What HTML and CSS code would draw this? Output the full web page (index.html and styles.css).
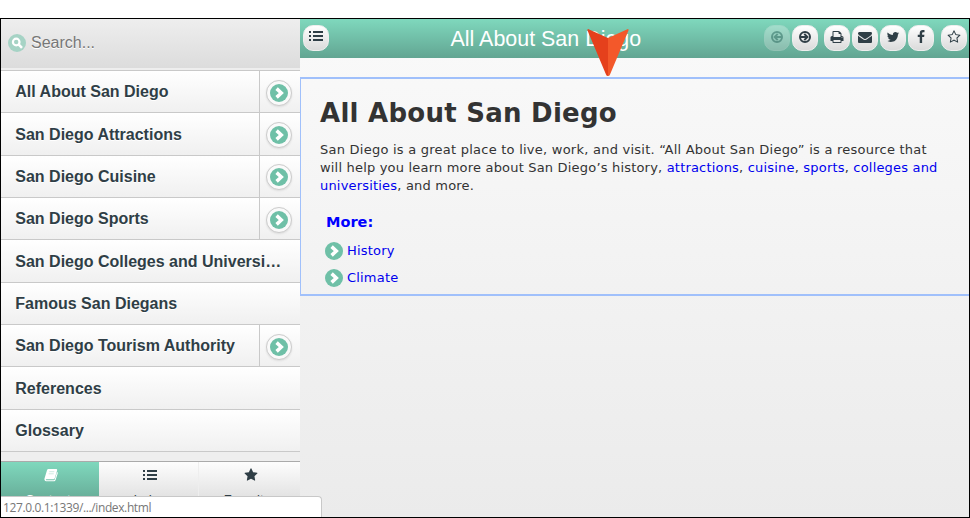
FILE: index.html
```html
<!DOCTYPE html>
<html lang="en">
<head>
<meta charset="utf-8">
<title>All About San Diego</title>
<link rel="stylesheet" href="styles.css">
</head>
<body>
<svg class="sprite" aria-hidden="true">
  <symbol id="chevron" viewBox="0 0 18 18"><circle cx="9" cy="9" r="9" fill="#6fc0a7"/><path d="M6.600 4.600L11.300 9L6.600 13.400" fill="none" stroke="#fff" stroke-width="3.500"/></symbol>
  <symbol id="search" viewBox="0 0 18 18"><circle cx="9" cy="9" r="9" fill="#a6d3c5"/><circle cx="8.200" cy="8" r="3.300" fill="none" stroke="#fff" stroke-width="2.200"/><path d="M10.600 10.400L14 13.800" stroke="#fff" stroke-width="2.600"/></symbol>
  <symbol id="list" viewBox="0 0 14 12"><path d="M0 1h2v2H0zM0 5h2v2H0zM0 9h2v2H0zM4 1h10v2H4zM4 5h10v2H4zM4 9h10v2H4z"/></symbol>
  <symbol id="right" viewBox="0 0 14 14"><circle cx="7" cy="7" r="5" fill="none" stroke="currentColor" stroke-width="2"/><path d="M3 6h4L5.600 4.600L7 3.200L10.800 7L7 10.800L5.600 9.400L7 8H3z"/></symbol>
  <symbol id="left" viewBox="0 0 14 14"><circle cx="7" cy="7" r="5" fill="none" stroke="currentColor" stroke-width="2"/><path d="M11 6H7l1.400-1.400L7 3.200L3.200 7L7 10.800l1.400-1.400L7 8h4z"/></symbol>
  <symbol id="print" viewBox="0 0 1792 1792"><path d="M448 1536h896v-256h-896v256zm0-640h896v-384h-160q-40 0-68-28t-28-68v-160h-640v640zm1152 64q0-26-19-45t-45-19-45 19-19 45 19 45 45 19 45-19 19-45zm128 0v416q0 13-9.500 22.500t-22.500 9.500h-224v160q0 40-28 68t-68 28h-960q-40 0-68-28t-28-68v-160h-224q-13 0-22.500-9.500t-9.500-22.500v-416q0-79 56.500-135.500t135.500-56.500h64v-544q0-40 28-68t68-28h672q40 0 88 20t76 48l152 152q28 28 48 76t20 88v256h64q79 0 135.500 56.500t56.500 135.500z"/></symbol>
  <symbol id="mail" viewBox="0 0 1792 1792"><path d="M1792 710v794q0 66-47 113t-113 47h-1472q-66 0-113-47t-47-113v-794q44 49 101 87 362 246 497 345 57 42 92.500 65.500t94.500 48 110 24.500h2q51 0 110-24.500t94.500-48 92.500-65.500q170-123 498-345 57-39 100-87zm0-294q0 79-49 151t-122 123q-376 261-468 325-10 7-42.500 31t-54 38.500-52 32.500-57.500 27-50 9h-2q-23 0-50-9t-57.500-27-52-32.500-54-38.500-42.500-31q-91-64-262-182.500t-205-142.500q-62-42-117-115.500t-55-136.500q0-78 41.500-130t118.500-52h1472q65 0 112.500 47t47.500 113z"/></symbol>
  <symbol id="twitter" viewBox="0 0 1792 1792"><path d="M1684 408q-67 98-162 167 1 14 1 42 0 130-38 259.500t-115.500 248.500-184.500 210.500-258 146-323 54.500q-271 0-496-145 35 4 78 4 225 0 401-138-105-2-188-64.500t-114-159.500q33 5 61 5 43 0 85-11-112-23-185.500-111.500t-73.500-205.500v-4q68 38 146 41-66-44-105-115t-39-154q0-88 44-163 121 149 294.500 238.500t371.500 99.500q-8-38-8-74 0-134 94.500-228.500t228.500-94.500q140 0 236 102 109-21 205-78-37 115-142 178 93-10 186-50z"/></symbol>
  <symbol id="facebook" viewBox="0 0 1792 1792"><path d="M1343 12v264h-157q-86 0-116 36t-30 108v189h293l-39 296h-254v759h-306v-759h-255v-296h255v-218q0-186 104-288.500t277-102.500q147 0 228 12z"/></symbol>
  <symbol id="star" viewBox="0 0 1792 1792"><path d="M1728 647q0 22-26 48l-363 354 86 500q1 7 1 20 0 21-10.500 35.500t-30.500 14.500q-19 0-40-12l-449-236-449 236q-22 12-40 12-21 0-31.500-14.500t-10.500-35.500q0-6 2-20l86-500-364-354q-25-27-25-48 0-37 56-46l502-73 225-455q19-41 49-41t49 41l225 455 502 73q56 9 56 46z"/></symbol>
  <symbol id="star-o" viewBox="0 0 1792 1792"><path d="M1201 1004l306-297-422-62-189-382-189 382-422 62 306 297-73 421 378-199 377 199zm527-357q0 22-26 48l-363 354 86 500q1 7 1 20 0 50-41 50-19 0-40-12l-449-236-449 236q-22 12-40 12-21 0-31.500-14.500t-10.500-35.500q0-6 2-20l86-500-364-354q-25-27-25-48 0-37 56-46l502-73 225-455q19-41 49-41t49 41l225 455 502 73q56 9 56 46z"/></symbol>
  <symbol id="book" viewBox="0 0 14 14"><path d="M4.600 1h7.400c1 0 1.400.6 1.100 1.500L10.800 10c-.3 1-.8 1.300-1.600 1.300H2.300c-.6 0-.6.9 0 .9h7.400c.6 0 .9-.3 1.100-.9l2.300-7.200c.6.300.8.7.6 1.300l-2.100 6.500c-.3.900-1 1.300-1.800 1.300H2.200C.8 13.200.100 11.900.500 10.600L3 2.300C3.300 1.400 3.800 1 4.600 1z"/><path d="M5.300 3.700h5M4.700 5.800h5" stroke="#a9dccb" stroke-width=".6"/></symbol>
</svg>
<div class="window">
  <aside class="sidebar">
    <div class="search"><svg class="disc"><use href="#search"/></svg><span>Search...</span></div>
    <ul class="toc">
      <li><span class="label">All About San Diego</span><span class="more"><i><svg class="disc"><use href="#chevron"/></svg></i></span></li>
      <li><span class="label">San Diego Attractions</span><span class="more"><i><svg class="disc"><use href="#chevron"/></svg></i></span></li>
      <li><span class="label">San Diego Cuisine</span><span class="more"><i><svg class="disc"><use href="#chevron"/></svg></i></span></li>
      <li><span class="label">San Diego Sports</span><span class="more"><i><svg class="disc"><use href="#chevron"/></svg></i></span></li>
      <li><span class="label">San Diego Colleges and Universi…</span></li>
      <li><span class="label">Famous San Diegans</span></li>
      <li><span class="label">San Diego Tourism Authority</span><span class="more"><i><svg class="disc"><use href="#chevron"/></svg></i></span></li>
      <li><span class="label">References</span></li>
      <li><span class="label">Glossary</span></li>
    </ul>
    <nav class="tabs">
      <a class="tab active"><svg><use href="#book"/></svg><span>Contents</span></a>
      <a class="tab"><svg class="list"><use href="#list"/></svg><span>Index</span></a>
      <a class="tab"><svg><use href="#star"/></svg><span>Favorites</span></a>
    </nav>
  </aside>
  <main class="main">
    <header class="bar">
      <a class="btn"><svg class="list"><use href="#list"/></svg></a>
      <h2>All About San Diego</h2>
      <div class="tools">
        <a class="btn off"><svg><use href="#left"/></svg></a>
        <a class="btn"><svg><use href="#right"/></svg></a>
        <a class="btn gap"><svg><use href="#print"/></svg></a>
        <a class="btn"><svg><use href="#mail"/></svg></a>
        <a class="btn"><svg><use href="#twitter"/></svg></a>
        <a class="btn"><svg><use href="#facebook"/></svg></a>
        <a class="btn gap2"><svg><use href="#star-o"/></svg></a>
      </div>
    </header>
    <article class="topic">
      <h1>All About San Diego</h1>
      <p>San Diego is a great place to live, work, and visit. “All About San Diego” is a resource that<br>will help you learn more about San Diego’s history, <a>attractions</a>, <a>cuisine</a>, <a>sports</a>, <a>colleges and<br>universities</a>, and more.</p>
      <h3>More:</h3>
      <ul class="links">
        <li><svg class="disc"><use href="#chevron"/></svg><a>History</a></li>
        <li><svg class="disc"><use href="#chevron"/></svg><a>Climate</a></li>
      </ul>
    </article>
  </main>
  <svg class="pointer" viewBox="0 0 42 49"><path d="M1 1L21 10V48Q19.500 48 19 46.500L.500 2.500Q.200 1 1 1z" fill="#e5401c"/><path d="M41 1L21 10V48Q22.500 48 23 46.500L41.500 2.500Q41.800 1 41 1z" fill="#f3582a"/></svg>
  <div class="status">127.0.0.1:1339/.../index.html</div>
</div>
</body>
</html>
```
FILE: styles.css
```css
* { box-sizing: border-box; }
body { margin: 0; padding-top: 18px; height: 518px; overflow: hidden; background: #fff; font-family: "Liberation Sans", Arial, sans-serif; color: #2f3e46; }
h1, h2, h3, p, ul { margin: 0; padding: 0; }
ul { list-style: none; }
svg { display: block; fill: currentColor; width: 14px; height: 14px; }
.sprite { position: absolute; width: 0; height: 0; }
.disc { width: 18px; height: 18px; flex: none; }
.list { height: 12px; }
.window { position: relative; display: flex; width: 970px; height: 500px; border: 1px solid #000; overflow: hidden; }

.sidebar { width: 299px; flex: none; display: flex; flex-direction: column; background: #eee; }
.search { height: 49px; display: flex; align-items: center; gap: 5px; padding: 0 0 1px 7px; background: linear-gradient(#eee, #dcdcdc); color: #777; font-size: 16px; text-shadow: 0 1px 0 #fff; }
.toc { margin-top: 2px; }
.toc li { display: flex; height: 42.330px; border-top: 1px solid #c9c9c9; background: linear-gradient(#fff, #f0f0f0); font-size: 16px; font-weight: bold; text-shadow: 0 1px 0 #fff; }
.toc li:last-child { height: 43px; border-bottom: 1px solid #c9c9c9; }
.label { flex: 1; padding: 12.250px 0 0 14.300px; line-height: 18px; white-space: nowrap; }
.more { width: 41px; border-left: 1px solid #c9c9c9; padding: 8.800px 0 0 6px; }
.more i { display: flex; align-items: center; justify-content: center; width: 26px; height: 26px; border: 1px solid #ccc; border-radius: 50%; background: #fafafa; box-shadow: 0 1px 2px #ddd; }
.tabs { display: flex; margin-top: auto; height: 56px; border-top: 1px solid #aaa; }
.tab { width: 100px; display: flex; flex-direction: column; align-items: center; padding: 6px 0 0 2px; gap: 11px; background: linear-gradient(#fdfdfd, #e2e2e2 36px); font-size: 13px; border-right: 1px solid #eee; }
.tab .list { height: 14px; }
.tab span { line-height: 14px; }
.tab:last-child { width: 101px; border-right: 0; }
.tab.active { width: 98px; border-right: 0; color: #fff; background: linear-gradient(#7fd8bd, #68ae99 36px); }

.main { flex: 1; background: linear-gradient(#fafafa, #ebebeb); }
.bar { height: 39px; display: flex; align-items: flex-start; padding: 6px 2px 0 3px; background: linear-gradient(#7fd8bd, #62a592); }
.bar h2 { margin-left: 121.500px; padding-top: 2px; color: #fff; font-size: 21.450px; line-height: 24px; font-weight: normal; white-space: nowrap; }
.tools { display: flex; gap: 2px; margin-left: auto; }
.btn { width: 26px; height: 26px; border-radius: 10px; border: 1px solid #eee; background: linear-gradient(#fff, #dadada); display: flex; justify-content: center; padding-top: 4px; color: #2f3e46; }
.off { opacity: .3; }
.gap { margin-left: 4px; }
.gap2 { margin-left: 5px; }

.topic { margin-top: 19px; height: 219px; border: 2px solid #a0c0fb; border-width: 2px 0 2px 1px; padding: 17px 0 0 19px; font-family: "DejaVu Sans", Verdana, sans-serif; font-size: 13px; letter-spacing: .190px; color: #333; }
.topic h1 { font-size: 26px; line-height: 34px; letter-spacing: .260px; }
.topic p { margin-top: 11px; line-height: 18px; white-space: nowrap; }
.topic p::first-line { letter-spacing: .240px; }
.topic a, .topic h3 { color: #00f; }
.topic a { color: #0000ee; }
.topic h3 { margin: 17px 0 0 6px; font-size: 14.500px; line-height: 20px; letter-spacing: 0; }
.links { margin: 5px 0 0 5px; }
.links li { display: flex; align-items: center; gap: 4px; height: 27px; }

.pointer { position: absolute; left: 586px; top: 9px; width: 42px; height: 49px; }
.status { position: absolute; left: 0; bottom: 0; width: 321px; height: 21px; padding: 2px; border: 1px solid #c8c8c8; border-width: 1px 1px 0 0; border-top-right-radius: 4px; background: #fff; color: #777; font: 12px/17px "Open Sans", sans-serif; letter-spacing: -.380px; }
```
